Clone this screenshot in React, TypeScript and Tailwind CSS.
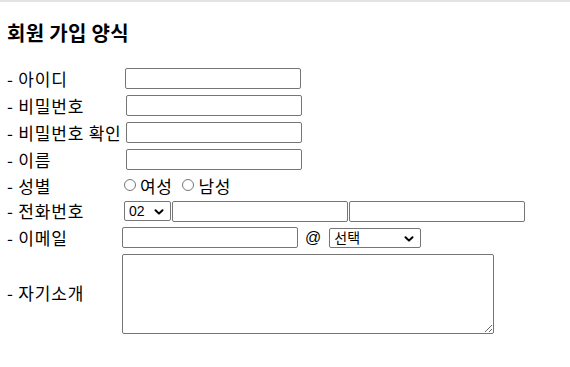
const font = "font-['Noto_Sans_CJK_KR','Noto_Sans',sans-serif]";
const inputCls =
  "h-[21px] w-[176px] rounded-[2px] border border-[#767676] bg-white px-[2px] text-[13px] outline-none";

function Chevron({ className }: { className?: string }) {
  return (
    <svg
      viewBox="0 0 10 6"
      className={className}
      fill="none"
      stroke="#000"
      strokeWidth="2"
      strokeLinecap="round"
      strokeLinejoin="round"
    >
      <path d="M1.5 1.2 5 4.6 8.5 1.2" />
    </svg>
  );
}

function FakeSelect({ value, width }: { value: string; width: string }) {
  return (
    <div
      className={`relative flex h-[20px] items-center rounded-[2px] border border-[#767676] bg-white pl-[4px] text-[14px] leading-none ${width}`}
    >
      <span className="font-['Liberation_Sans','Noto_Sans_CJK_KR',sans-serif]">{value}</span>
      <Chevron className="absolute right-[6px] top-[7px] h-[6px] w-[10px]" />
    </div>
  );
}

function Row({
  label,
  h,
  children,
}: {
  label: string;
  h: string;
  children: React.ReactNode;
}) {
  return (
    <div className={`flex items-center ${h}`}>
      <div className="w-[115px] shrink-0 whitespace-nowrap text-[17px] leading-[20px] tracking-[0.8px] text-black">
        - {label}
      </div>
      {children}
    </div>
  );
}

function Radio({ label }: { label: string }) {
  return (
    <label className="flex items-center">
      <span className="mt-[-1px] h-[12px] w-[12px] rounded-full border border-[#767676] bg-white" />
      <span className="ml-[4px] text-[17px] leading-[20px] tracking-[0.6px]">{label}</span>
    </label>
  );
}

export default function App() {
  return (
    <div className={`h-[367px] w-[570px] overflow-hidden bg-white ${font} text-black`}>
      <div className="h-[2px] bg-[#e3e3e3]" />
      <div className="pl-[7px]">
        <h1 className="mt-[18px] mb-[20px] h-[25px] text-[20px] font-bold leading-[25px] tracking-[0.3px]">
          회원 가입 양식
        </h1>
        <div className="flex flex-col">
          <Row label="아이디" h="h-[27px]">
            <input className={`${inputCls} ml-[3px]`} />
          </Row>
          <Row label="비밀번호" h="h-[27px]">
            <input type="password" className={`${inputCls} ml-[4px]`} />
          </Row>
          <Row label="비밀번호 확인" h="h-[27px]">
            <input type="password" className={`${inputCls} ml-[4px]`} />
          </Row>
          <Row label="이름" h="h-[27px]">
            <input className={`${inputCls} ml-[4px]`} />
          </Row>
          <Row label="성별" h="h-[25px]">
            <div className="ml-[2px] flex items-center gap-[10px]">
              <Radio label="여성" />
              <Radio label="남성" />
            </div>
          </Row>
          <Row label="전화번호" h="h-[26px]">
            <div className="ml-[2px] flex items-center gap-[1px]">
              <FakeSelect value="02" width="w-[47px]" />
              <input className={inputCls} />
              <input className={inputCls} />
            </div>
          </Row>
          <Row label="이메일" h="h-[27px]">
            <div className="flex items-center">
              <input className={inputCls} />
              <span className="ml-[7px] mr-[8px] font-['Liberation_Sans',sans-serif] text-[16px]">@</span>
              <FakeSelect value="선택" width="w-[92px]" />
            </div>
          </Row>
          <Row label="자기소개" h="h-[84px]">
            <textarea className="mt-[2px] h-[80px] w-[372px] rounded-[2px] border border-[#767676] bg-white text-[13px] outline-none" />
          </Row>
        </div>
      </div>
    </div>
  );
}
